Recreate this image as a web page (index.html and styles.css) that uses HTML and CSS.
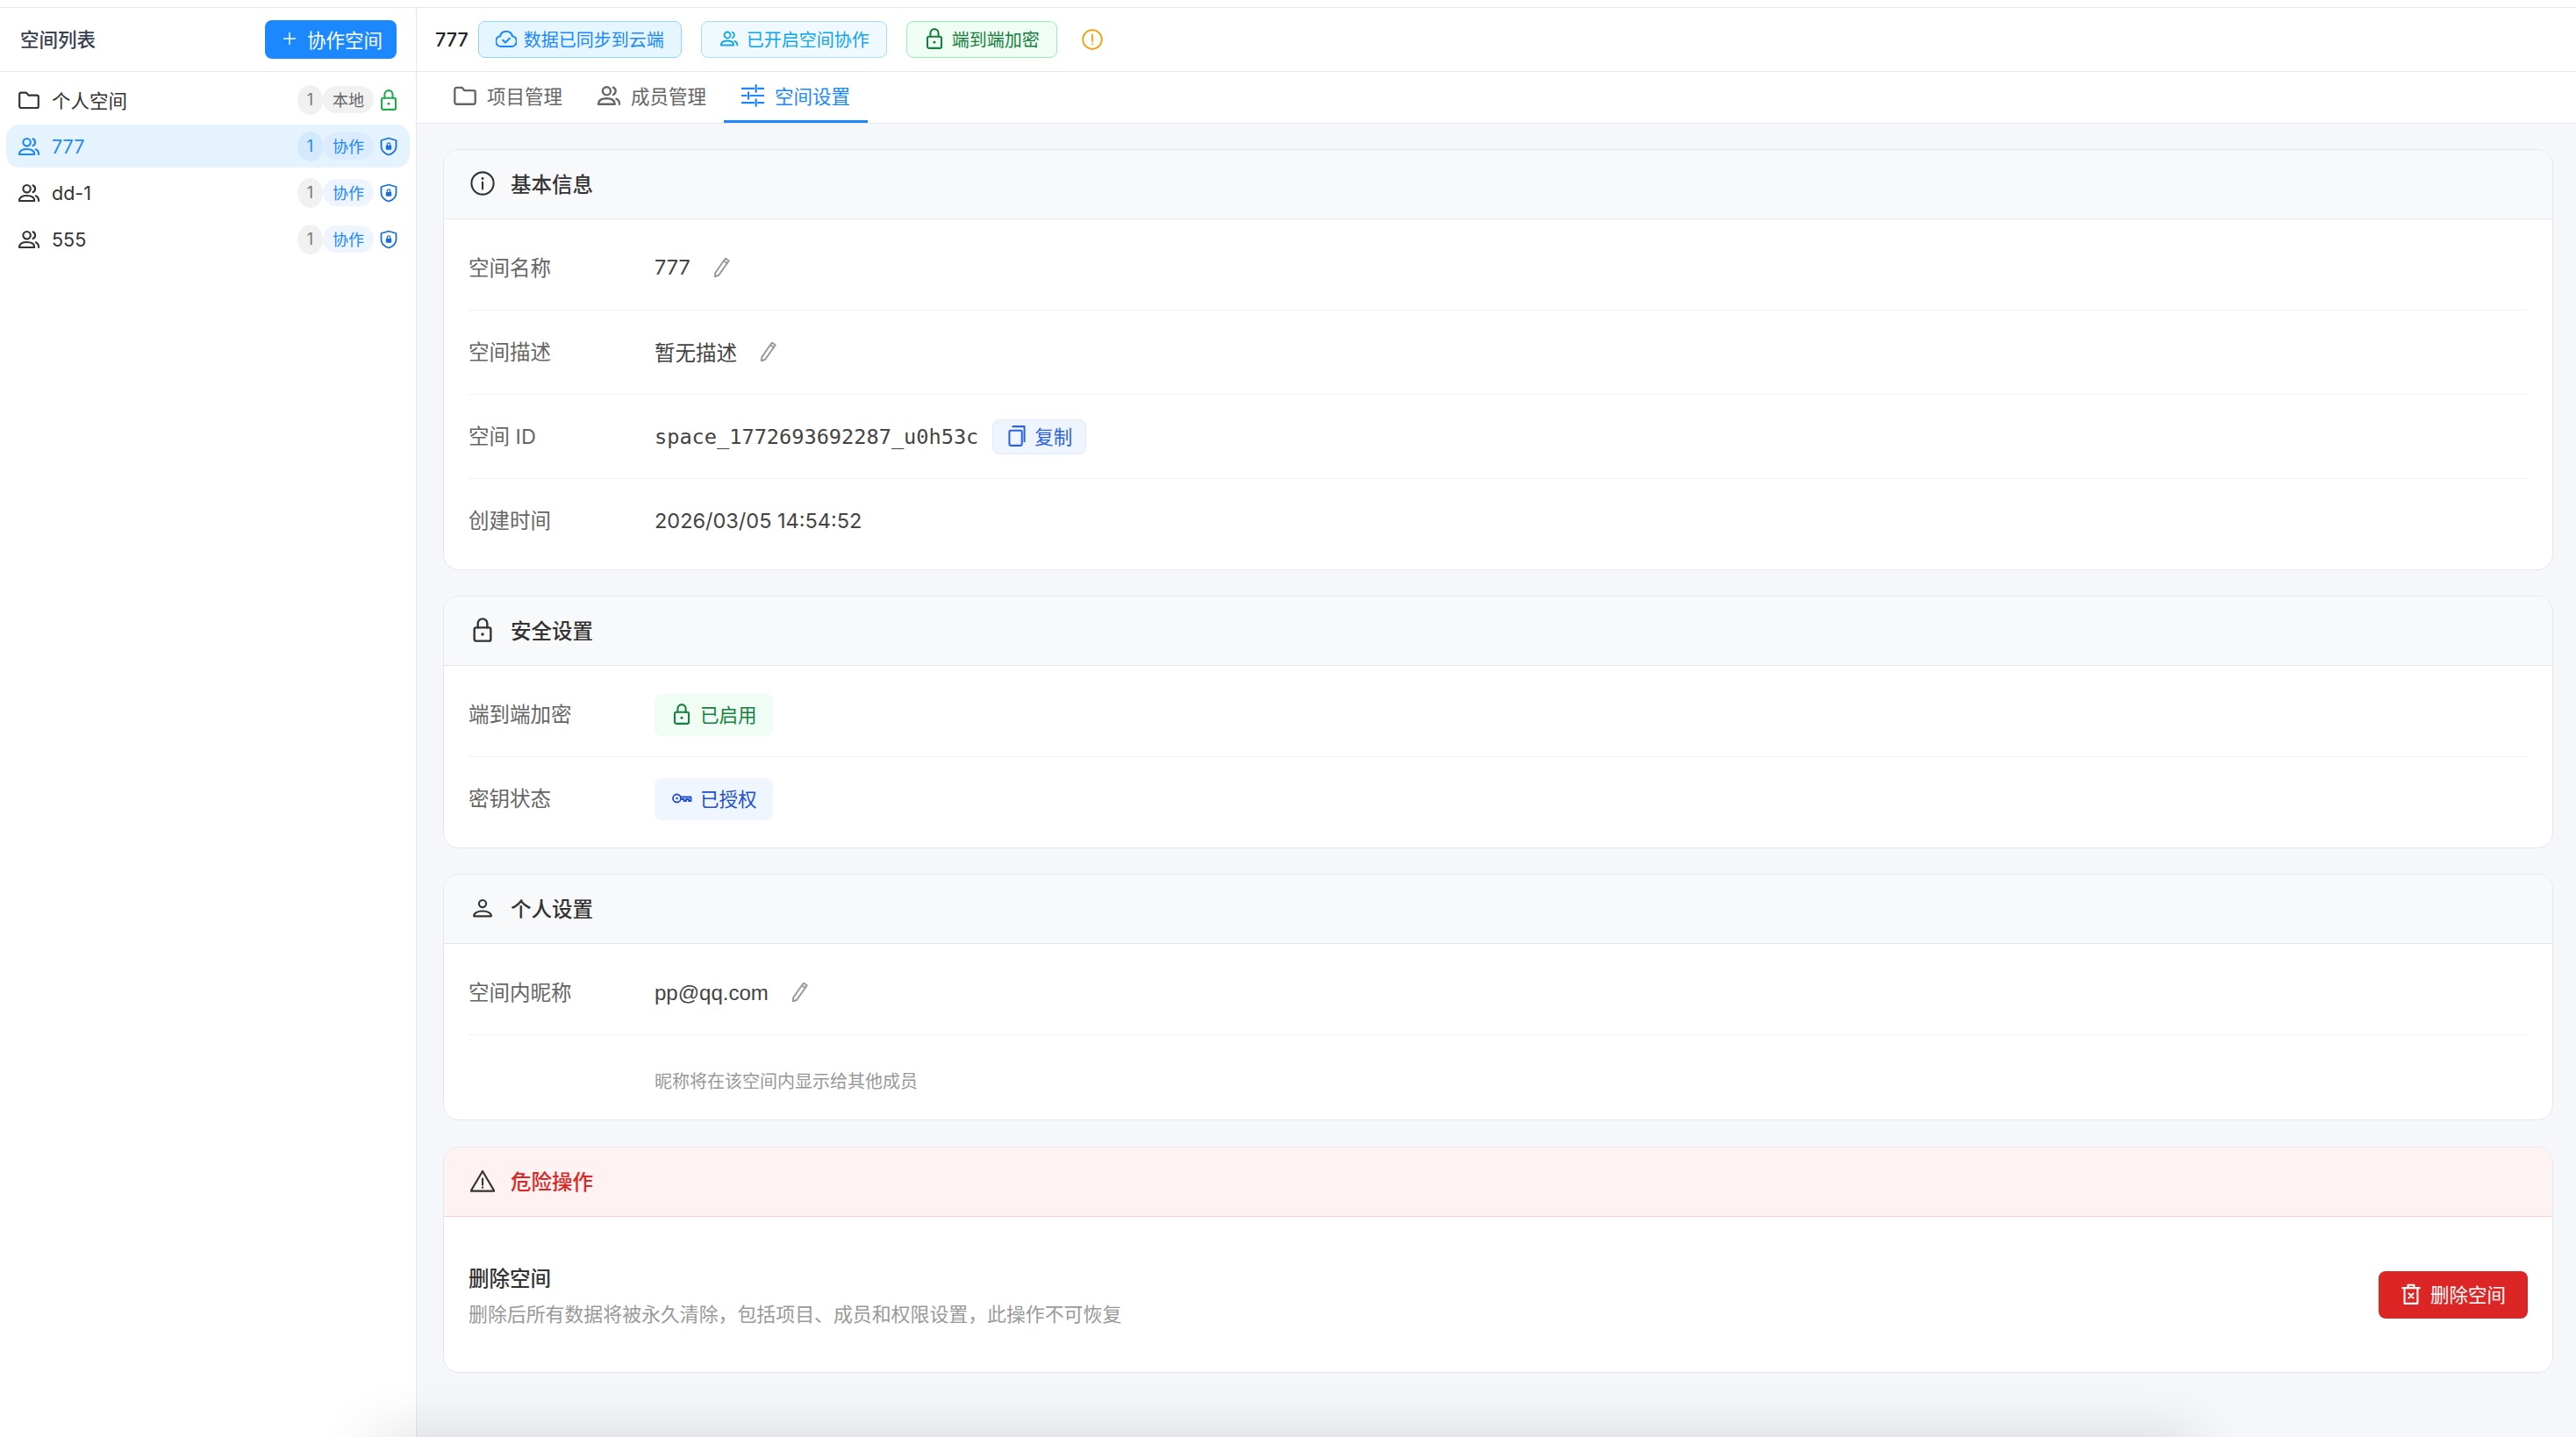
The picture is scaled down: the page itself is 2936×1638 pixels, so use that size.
FILE: index.html
```html
<!DOCTYPE html>
<html lang="zh-CN">
<head>
    <meta charset="UTF-8">
    <title>空间设置</title>
    <link rel="stylesheet" href="styles.css">
</head>
<body>
    <svg class="sprite" xmlns="http://www.w3.org/2000/svg">
        <symbol id="i-folder" viewBox="2 2 20 20"><path d="M3 6.500A1.500 1.500 0 0 1 4.500 5h5l2 2.500h8A1.500 1.500 0 0 1 21 9v9A1.500 1.500 0 0 1 19.500 19.500h-15A1.500 1.500 0 0 1 3 18z"/></symbol>
        <symbol id="i-group" viewBox="2 2 20 20"><circle cx="10" cy="8" r="3.500"/><path d="M2.800 19.500c0-3.300 3-5 7.200-5s7.200 1.700 7.200 5z"/><path d="M15.800 4.800a3.500 3.500 0 0 1 0 6.400"/><path d="M18.500 14.800c1.900.8 2.800 2.400 2.800 4.700"/></symbol>
        <symbol id="i-user" viewBox="0 0 24 24"><circle cx="12" cy="7.800" r="3.500"/><path d="M3.500 20c0-3 3.500-5 8.500-5s8.500 2 8.500 5z"/></symbol>
        <symbol id="i-lock" viewBox="2 1.500 20 21"><rect x="5" y="10" width="14" height="11.500" rx="1.500"/><path d="M8 10V6.500a4 4 0 0 1 8 0V10"/><circle class="solid" cx="12" cy="15.700" r="1.300"/></symbol>
        <symbol id="i-shield" viewBox="0 0 24 24"><path d="M12 2.500 20.500 5v7c0 4.500-3.600 7.900-8.500 9.500-4.900-1.600-8.500-5-8.500-9.500V5z"/><rect class="solid" x="8.800" y="10.800" width="6.400" height="5" rx="1"/><path class="thin" d="M10.300 10.800V9.600a1.700 1.700 0 0 1 3.400 0v1.200"/></symbol>
        <symbol id="i-plus" viewBox="0 0 24 24"><path d="M12 5v14M5 12h14"/></symbol>
        <symbol id="i-cloud" viewBox="2 2 20 20"><path d="M7 19.500a5 5 0 0 1-.8-9.900 6 6 0 0 1 11.600 0 5 5 0 0 1-.8 9.900z"/><path d="m8.800 13.500 2.400 2.300 4-4"/></symbol>
        <symbol id="i-alert" viewBox="0 0 24 24"><circle cx="12" cy="12" r="10.800"/><path d="M12 6.500v7.500"/><circle class="solid" cx="12" cy="17.300" r="1"/></symbol>
        <symbol id="i-sliders" viewBox="1.500 1.500 21 21"><path d="M2 5.500h11M17 5.500h5M15 2.500v6M2 12h4M10 12h12M8 9v6M2 18.500h11M17 18.500h5M15 15.500v6"/></symbol>
        <symbol id="i-info" viewBox="0 0 24 24"><circle cx="12" cy="12" r="10.800"/><path d="M12 11v6.500"/><circle class="solid" cx="12" cy="7.300" r="1.200"/></symbol>
        <symbol id="i-pencil" viewBox="3 2 20 20"><path d="M16.500 2.500 20 5 9.500 20 5.500 21.500l.5-4z"/><path d="m14.800 5 3.500 2.500"/></symbol>
        <symbol id="i-copy" viewBox="3 1.500 18 21"><rect x="4.500" y="6.500" width="12.500" height="15" rx="1.200"/><path d="M8 2.500h11.500v15"/></symbol>
        <symbol id="i-key" viewBox="0 0 24 24"><circle cx="6.500" cy="12" r="4.500"/><circle class="solid" cx="6.500" cy="12" r="1.300"/><path d="M11 10.500h11.500v4.500h-2.500v-2h-3v2h-2.500v-2H11"/></symbol>
        <symbol id="i-warning" viewBox="0 0 24 24"><path d="M12 2.500 23.500 22H.5z"/><path d="M12 10v6"/><circle class="solid" cx="12" cy="18.500" r="1"/></symbol>
        <symbol id="i-trash" viewBox="2 1.500 20 21"><path d="M3.500 6h17M9 6V3h6v3M5.500 6v15.500h13V6"/><path d="m9.800 11.500 4.400 4.400M14.200 11.500l-4.400 4.400"/></symbol>
    </svg>

    <div class="top-strip"></div>

    <div class="app">
        <aside class="sidebar">
            <div class="sidebar-head">
                <span class="sidebar-title">空间列表</span>
                <button class="btn-new"><svg class="icon"><use href="#i-plus"/></svg>协作空间</button>
            </div>
            <div class="space-list">
                <div class="space-item">
                    <svg class="icon"><use href="#i-folder"/></svg>
                    <span class="space-name">个人空间</span>
                    <span class="count">1</span>
                    <span class="kind">本地</span>
                    <svg class="icon state-local"><use href="#i-lock"/></svg>
                </div>
                <div class="space-item active">
                    <svg class="icon"><use href="#i-group"/></svg>
                    <span class="space-name">777</span>
                    <span class="count">1</span>
                    <span class="kind team">协作</span>
                    <svg class="icon state-team"><use href="#i-shield"/></svg>
                </div>
                <div class="space-item">
                    <svg class="icon"><use href="#i-group"/></svg>
                    <span class="space-name">dd-1</span>
                    <span class="count">1</span>
                    <span class="kind team">协作</span>
                    <svg class="icon state-team"><use href="#i-shield"/></svg>
                </div>
                <div class="space-item">
                    <svg class="icon"><use href="#i-group"/></svg>
                    <span class="space-name">555</span>
                    <span class="count">1</span>
                    <span class="kind team">协作</span>
                    <svg class="icon state-team"><use href="#i-shield"/></svg>
                </div>
            </div>
        </aside>

        <main class="main">
            <div class="main-head">
                <span class="main-title">777</span>
                <span class="chip chip-sync"><svg class="icon"><use href="#i-cloud"/></svg>数据已同步到云端</span>
                <span class="chip chip-team"><svg class="icon"><use href="#i-group"/></svg>已开启空间协作</span>
                <span class="chip chip-secure"><svg class="icon"><use href="#i-lock"/></svg>端到端加密</span>
                <svg class="icon icon-alert"><use href="#i-alert"/></svg>
            </div>

            <nav class="tabs">
                <div class="tab"><svg class="icon"><use href="#i-folder"/></svg>项目管理</div>
                <div class="tab"><svg class="icon"><use href="#i-group"/></svg>成员管理</div>
                <div class="tab active"><svg class="icon"><use href="#i-sliders"/></svg>空间设置</div>
            </nav>

            <div class="content">
                <section class="card">
                    <h2 class="card-head"><svg class="icon"><use href="#i-info"/></svg>基本信息</h2>
                    <div class="card-body">
                        <div class="row">
                            <span class="row-label">空间名称</span>
                            <span class="row-value">777</span>
                            <svg class="icon icon-edit"><use href="#i-pencil"/></svg>
                        </div>
                        <div class="row">
                            <span class="row-label">空间描述</span>
                            <span class="row-value">暂无描述</span>
                            <svg class="icon icon-edit"><use href="#i-pencil"/></svg>
                        </div>
                        <div class="row">
                            <span class="row-label">空间 ID</span>
                            <span class="row-value latin mono">space_1772693692287_u0h53c</span>
                            <button class="btn-copy"><svg class="icon"><use href="#i-copy"/></svg>复制</button>
                        </div>
                        <div class="row">
                            <span class="row-label">创建时间</span>
                            <span class="row-value latin">2026/03/05 14:54:52</span>
                        </div>
                    </div>
                </section>

                <section class="card">
                    <h2 class="card-head"><svg class="icon"><use href="#i-lock"/></svg>安全设置</h2>
                    <div class="card-body">
                        <div class="row">
                            <span class="row-label">端到端加密</span>
                            <span class="badge badge-green"><svg class="icon"><use href="#i-lock"/></svg>已启用</span>
                        </div>
                        <div class="row">
                            <span class="row-label">密钥状态</span>
                            <span class="badge badge-blue"><svg class="icon"><use href="#i-key"/></svg>已授权</span>
                        </div>
                    </div>
                </section>

                <section class="card">
                    <h2 class="card-head"><svg class="icon"><use href="#i-user"/></svg>个人设置</h2>
                    <div class="card-body">
                        <div class="row">
                            <span class="row-label">空间内昵称</span>
                            <span class="row-value latin email">pp@qq.com</span>
                            <svg class="icon icon-edit"><use href="#i-pencil"/></svg>
                        </div>
                        <div class="row row-hint">
                            <span class="row-label"></span>
                            <span class="hint">昵称将在该空间内显示给其他成员</span>
                        </div>
                    </div>
                </section>

                <section class="card card-danger">
                    <h2 class="card-head"><svg class="icon"><use href="#i-warning"/></svg><span class="danger-title">危险操作</span></h2>
                    <div class="danger-body">
                        <div class="danger-text">
                            <div class="danger-name">删除空间</div>
                            <div class="danger-desc">删除后所有数据将被永久清除，包括项目、成员和权限设置，此操作不可恢复</div>
                        </div>
                        <button class="btn-delete"><svg class="icon"><use href="#i-trash"/></svg>删除空间</button>
                    </div>
                </section>
            </div>
        </main>
    </div>

    <div class="dock-shadow"></div>
</body>
</html>
```

FILE: styles.css
```css
* {
    box-sizing: border-box;
}

html,
body {
    height: 100%;
}

body {
    margin: 0;
    overflow: hidden;
    position: relative;
    display: flex;
    flex-direction: column;
    background-color: white;
    color: #333;
    font-family: Inter, 'Noto Sans CJK SC', sans-serif;
    font-size: 21.5px;
}

button {
    border: none;
    font-family: inherit;
    font-size: inherit;
    cursor: pointer;
}

.sprite {
    display: none;
}

.icon {
    flex: none;
    width: 24px;
    height: 24px;
    fill: none;
    stroke: currentColor;
    stroke-width: 1.8;
    stroke-linejoin: round;
    stroke-linecap: round;
}

.solid {
    fill: currentColor;
    stroke: none;
}

.thin {
    stroke-width: 1.2;
}

.top-strip {
    flex: none;
    height: 9px;
    border-bottom: 1px solid #e5e6e8;
}

.app {
    flex: 1;
    display: flex;
    min-height: 0;
}

/* sidebar */
.sidebar {
    flex: none;
    width: 475px;
    border-right: 1px solid #e5e6e8;
}

.sidebar-head {
    height: 73px;
    display: flex;
    align-items: center;
    justify-content: space-between;
    padding: 0 22px 0 23px;
    border-bottom: 1px solid #e5e6e8;
}

.sidebar-title {
    padding-bottom: 3px;
    color: #374151;
    font-weight: 500;
}

.btn-new {
    width: 150px;
    height: 44px;
    display: flex;
    align-items: center;
    padding: 0 0 2px 17px;
    gap: 9px;
    border-radius: 8px;
    background-color: #1b88ff;
    color: white;
}

.btn-new .icon {
    width: 22px;
    height: 22px;
    stroke-width: 1.6;
}

.space-list {
    display: flex;
    flex-direction: column;
    gap: 4px;
    padding: 7px 7px 0;
}

.space-item {
    height: 49px;
    display: flex;
    align-items: center;
    padding: 0 12px 0 14px;
    border-radius: 15px;
}

.space-name {
    flex: 1;
    margin-left: 14px;
}

.count {
    width: 29px;
    height: 34px;
    display: flex;
    align-items: center;
    justify-content: center;
    border-radius: 50%;
    background-color: #f1f1f1;
    color: #777;
    font-size: 18px;
}

.kind {
    width: 58px;
    height: 31px;
    display: flex;
    align-items: center;
    justify-content: center;
    margin-right: 5px;
    padding-bottom: 2px;
    border-radius: 16px;
    background-color: #f1f1f1;
    color: #666;
    font-size: 18px;
}

.kind.team {
    background-color: #eef5ff;
    color: #1b88ff;
}

.state-local {
    color: #22a94f;
}

.state-team {
    color: #1a6fd8;
}

.space-item.active {
    background-color: #e5f3ff;
    color: #1b88ff;
}

.space-item.active .count {
    background-color: #d4e9fe;
    color: #1b88ff;
}

.space-item.active .kind {
    background-color: #dbecff;
}

/* main */
.main {
    flex: 1;
    min-width: 0;
    display: flex;
    flex-direction: column;
    background-color: #f5f7fb;
}

.main-head {
    flex: none;
    height: 73px;
    display: flex;
    align-items: center;
    gap: 22px;
    padding-left: 21px;
    background-color: white;
    border-bottom: 1px solid #e5e6e8;
}

.main-title {
    margin-right: -11px;
    color: #222;
    font-weight: 500;
}

.chip {
    height: 42px;
    display: flex;
    align-items: center;
    gap: 8px;
    padding: 0 19px 2px;
    border: 1px solid;
    border-radius: 8px;
    font-size: 20px;
}

.chip-sync {
    background-color: #e6f6ff;
    border-color: #91d5ff;
    color: #1b88ff;
}

.chip-team {
    background-color: #f0f9ff;
    border-color: #a5dcfb;
    color: #0ea5e9;
}

.chip-secure {
    background-color: #f0fdf4;
    border-color: #9becb8;
    color: #15803d;
}

.chip-team .icon {
    width: 20px;
    height: 20px;
    margin: 0 2px;
}

.icon-alert {
    margin-left: 6px;
    color: #f59e0b;
}

.tabs {
    flex: none;
    height: 59px;
    display: flex;
    padding-left: 22px;
    background-color: white;
    border-bottom: 1px solid #e5e6e8;
}

.tab {
    height: 58px;
    display: flex;
    align-items: center;
    gap: 12px;
    padding: 0 20px 2px;
    border-bottom: 3px solid transparent;
    color: #666;
}

.tab .icon {
    width: 26px;
    height: 26px;
}

.tab.active {
    border-bottom-color: #1b88ff;
    color: #1b88ff;
}

.content {
    flex: 1;
    min-height: 0;
    display: flex;
    flex-direction: column;
    gap: 29px;
    padding: 29px 26px 0 30px;
}

.card {
    flex: none;
    border: 1px solid #e5e7eb;
    border-radius: 18px;
    background-color: white;
    overflow: hidden;
}

.card-head {
    height: 79px;
    display: flex;
    align-items: center;
    gap: 18px;
    margin: 0;
    padding: 0 0 2px 30px;
    background-color: #f8f9fb;
    border-bottom: 1px solid #e5e7eb;
    color: #333;
    font-size: 23.5px;
    font-weight: 500;
}

.card-head .icon {
    width: 28px;
    height: 28px;
}

.card-body {
    padding: 8px 28px;
}

.row {
    height: 96px;
    display: flex;
    align-items: center;
    border-bottom: 1px solid #f0f1f3;
    font-size: 23.5px;
}

.row:last-child {
    border-bottom: none;
    height: 95px;
}

.row-label {
    flex: none;
    width: 212px;
    padding-bottom: 4px;
    color: #666;
}

.row-value {
    padding-bottom: 2px;
    color: #444;
}

.row-value.latin {
    padding-bottom: 0;
}

.email {
    font-family: 'Liberation Sans', sans-serif;
    font-size: 24px;
}

.mono {
    font-family: 'DejaVu Sans Mono', monospace;
    font-size: 23.6px;
}

.icon-edit {
    width: 22px;
    height: 22px;
    margin: 0 0 2px 25px;
    color: #999;
}

.btn-copy {
    height: 40px;
    display: flex;
    align-items: center;
    gap: 8px;
    margin-left: 16px;
    padding: 0 15px 2px;
    border: 1px solid #dfeafc;
    border-radius: 8px;
    background-color: #eef5ff;
    color: #2b62e3;
    font-size: 21.5px;
}

.badge {
    width: 135px;
    height: 48px;
    display: flex;
    align-items: center;
    gap: 9px;
    padding: 0 0 2px 19px;
    border-radius: 8px;
    font-size: 21.5px;
}

.badge-green {
    background-color: #f0fdf4;
    color: #15803d;
}

.badge-blue {
    background-color: #eff6ff;
    color: #1d4ed8;
}

.row:last-child.row-hint {
    height: 88px;
    padding: 14px 0 0;
}

.hint {
    color: #999;
    font-size: 20px;
}

.card-danger {
    margin-top: 1px;
}

.card-danger .card-head {
    background-color: #fef2f2;
    border-bottom-color: #fecdd3;
}

.danger-title {
    color: #dc2626;
}

.danger-body {
    height: 177px;
    display: flex;
    align-items: center;
    justify-content: space-between;
    padding: 0 28px;
}

.danger-text {
    display: flex;
    flex-direction: column;
    gap: 8px;
    padding-top: 4px;
}

.danger-name {
    color: #333;
    font-size: 23.5px;
    font-weight: 500;
    line-height: 32px;
}

.danger-desc {
    color: #999;
    font-size: 21.9px;
    line-height: 32px;
}

.btn-delete {
    width: 170px;
    height: 54px;
    display: flex;
    align-items: center;
    gap: 10px;
    padding: 0 0 2px 25px;
    border-radius: 8px;
    background-color: #dc2626;
    color: white;
}

/* shadow of the dock just under the window */
.dock-shadow {
    position: absolute;
    left: 420px;
    right: 430px;
    top: 100%;
    height: 40px;
    border-radius: 40px;
    box-shadow: 0 0 65px rgba(0, 0, 0, 0.16);
}
```
